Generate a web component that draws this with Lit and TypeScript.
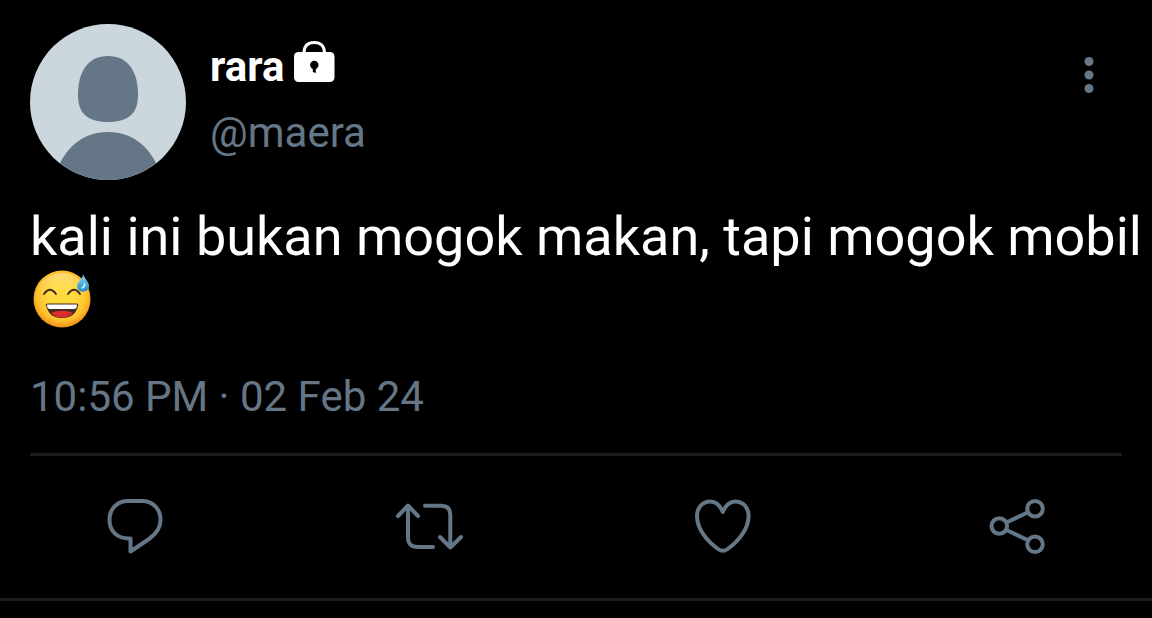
import { LitElement, html, css, svg } from "lit";
import { customElement, property } from "lit/decorators.js";

const icons = {
  reply: svg`<path d="M26 16H40C51 16 58.500 24 58.500 35C58.500 43 54 49 47 54L28.500 66.500V53.500H27C15 53.500 7.500 46 7.500 35C7.500 24 15 16 26 16Z"/>`,
  retweet: svg`<path d="M2 31L12 20.500L22 31M12 21.500V52C12 59 15 62 22 62H37M29 20.700H45C51 20.700 54.300 24 54.300 30V62M44 52L54.300 62.500L65 52" />`,
  like: svg`<path d="M32.800 27C30 20 26 16.500 20.500 16.500C12 16.500 7 23 7 31C7 44 17 56 28 64Q32.800 67.500 37.600 64C48.600 56 58.600 44 58.600 31C58.600 23 53.600 16.500 45.100 16.500C39.600 16.500 35.600 20 32.800 27Z"/>`,
  share: svg`<circle cx="15.300" cy="41" r="7.800"/><circle cx="51" cy="23.700" r="7.800"/><circle cx="51" cy="59.300" r="7.800"/><path d="M22.500 37.500L43.500 27.500M22.500 45L43.500 55"/>`,
};

@customElement("tweet-action")
export class TweetAction extends LitElement {
  static styles = css`
    :host { display: block; }
    .action {
      display: block;
      padding: 0;
      border: 0;
      background: none;
      color: #657786;
      cursor: pointer;
    }
    .icon {
      display: block;
      width: 66px;
      height: 84px;
      overflow: visible;
      fill: none;
      stroke: currentColor;
      stroke-width: 4px;
      stroke-linecap: round;
      stroke-linejoin: round;
    }
  `;

  @property() name: keyof typeof icons = "reply";

  render() {
    return html`<button class="action" aria-label=${this.name}>
      <svg class="icon" viewBox="0 0 66 84" aria-hidden="true">${icons[this.name]}</svg>
    </button>`;
  }
}

@customElement("app-root")
export class AppRoot extends LitElement {
  static styles = css`
    :host {
      display: block;
      min-height: 100vh;
      background: #000;
      color: #fff;
      font-family: Roboto, "Noto Sans", sans-serif;
    }
    .tweet {
      padding-top: 24px;
      border-bottom: 3px solid #1c1c1c;
    }
    .header {
      display: flex;
      align-items: flex-start;
      gap: 24px;
      padding: 0 30px;
    }
    .avatar { display: block; flex: none; width: 156px; height: 156px; }
    .names { flex: 1; min-width: 0; padding-top: 10px; }
    .name, .handle { margin: 0; font-size: 42px; line-height: 66px; }
    .name { display: flex; align-items: center; gap: 8px; font-weight: 700; }
    .handle { color: #657786; }
    .lock { display: block; width: 44px; height: 66px; }
    .more {
      display: block;
      margin-top: 27px;
      padding: 0;
      border: 0;
      background: none;
      color: #657786;
      cursor: pointer;
    }
    .dots { display: block; width: 66px; height: 48px; fill: currentColor; }
    .text {
      margin: 0;
      padding: 25px 8px 0 30px;
      font-size: 54px;
      line-height: 63px;
    }
    .emoji { width: 64px; height: 63px; vertical-align: top; }
    .date {
      display: block;
      margin: 0 30px;
      padding: 41px 0 32px;
      border-bottom: 3px solid #1c1c1c;
      color: #657786;
      font-size: 42px;
      line-height: 49px;
    }
    .actions {
      display: flex;
      justify-content: space-between;
      padding: 29px 102px;
    }
  `;

  render() {
    return html`
      <article class="tweet">
        <header class="header">
          <svg class="avatar" viewBox="0 0 156 156" role="img" aria-label="rara">
            <defs><clipPath id="round"><circle cx="78" cy="78" r="78" /></clipPath></defs>
            <g clip-path="url(#round)">
              <rect width="156" height="156" fill="#ccd6dd" />
              <path fill="#657786" d="M78 32C59 32 48 46 48 71C48 89 57 98 78 98C99 98 108 89 108 71C108 46 97 32 78 32Z" />
              <path fill="#657786" d="M23 156C33 124 52 108 78 108C104 108 123 124 133 156Z" />
            </g>
          </svg>
          <div class="names">
            <h1 class="name">
              <span>rara</span>
              <svg class="lock" viewBox="0 1 44 66" role="img" aria-label="Protected account">
                <path fill="none" stroke="#fff" stroke-width="3" d="M12 22V20C12 13 16 9.500 22.300 9.500C28.500 9.500 32.500 13 32.500 20V22" />
                <rect x="2" y="19" width="40.500" height="30" rx="4.500" fill="#fff" />
                <circle cx="22.300" cy="32" r="4.200" />
                <path d="M20.800 33H23.800V40L20.800 39Z" />
              </svg>
            </h1>
            <p class="handle">@maera</p>
          </div>
          <button class="more" aria-label="More">
            <svg class="dots" viewBox="0 0 66 48" aria-hidden="true">
              <circle cx="33" cy="10.500" r="4.500" /><circle cx="33" cy="24" r="4.500" /><circle cx="33" cy="37.500" r="4.500" />
            </svg>
          </button>
        </header>
        <p class="text">
          kali ini bukan mogok makan, tapi mogok mobil
          <svg class="emoji" viewBox="0 0 64 63" role="img" aria-label="😅">
            <defs>
              <radialGradient id="face" cx="50%" cy="45%" r="56%">
                <stop offset="0.400" stop-color="#ffd93a" />
                <stop offset="0.780" stop-color="#fdc02c" />
                <stop offset="1" stop-color="#f08a14" />
              </radialGradient>
              <linearGradient id="sheen" x2="0" y2="1">
                <stop stop-color="#fff" stop-opacity="0.350" />
                <stop offset="0.550" stop-color="#ffe060" stop-opacity="0" />
              </linearGradient>
              <linearGradient id="drop" x2="0" y2="1">
                <stop stop-color="#8edaf5" /><stop offset="1" stop-color="#278bc8" />
              </linearGradient>
            </defs>
            <circle cx="32" cy="31" r="28.500" fill="url(#face)" />
            <circle cx="32" cy="31" r="26" fill="url(#sheen)" />
            <path fill="none" stroke="#402a22" stroke-width="1.800" stroke-linecap="round" d="M14 26Q20 17.500 26 26M38 26Q44 17.500 50 26" />
            <path fill="#422b20" d="M16 37Q15 35.500 18 35.500H46Q49 35.500 48 38C46 46 41 50 32 50C23 50 18 46 16 37Z" />
            <path fill="#d92e2b" d="M21 45C27 42 37 42 43 45C40 48 37 49.500 32 49.500C27 49.500 24 48 21 45Z" />
            <path fill="#fff" d="M17 36.500H47Q47 41 44 41H20Q17 41 17 36.500Z" />
            <path fill="url(#drop)" d="M53 6C54.500 11 59.500 14 59 18.500C58.500 22.500 55 24 52 23.500C48 23 46.500 20 47.500 16.500C49 12 53 11 53 6Z" />
            <path fill="none" stroke="#d4f4ff" stroke-width="1.500" stroke-linecap="round" d="M52 20Q55 19 54.500 16" />
          </svg>
        </p>
        <time class="date" datetime="2024-02-02T22:56">10:56 PM · 02 Feb 24</time>
        <footer class="actions">
          <tweet-action name="reply"></tweet-action>
          <tweet-action name="retweet"></tweet-action>
          <tweet-action name="like"></tweet-action>
          <tweet-action name="share"></tweet-action>
        </footer>
      </article>
    `;
  }
}
